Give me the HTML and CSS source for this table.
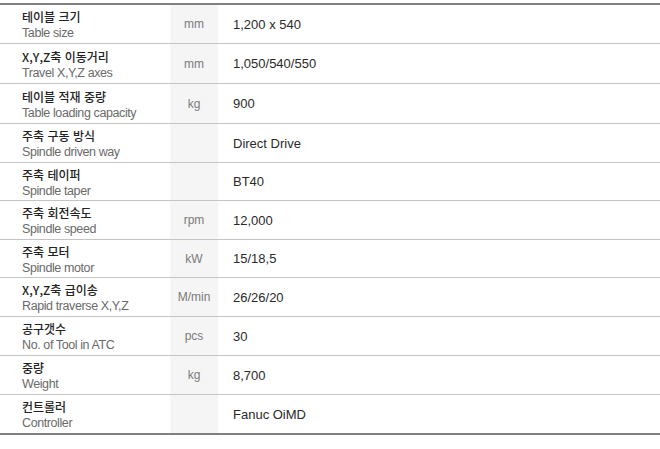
FILE: index.html
```html
<!DOCTYPE html>
<html lang="ko">
<head>
<meta charset="utf-8">
<link rel="stylesheet" href="styles.css">
</head>
<body>
<div class="spec">
  <div class="row h39"><div class="label"><span class="ko">테이블 크기</span><span class="en">Table size</span></div><div class="unit">mm</div><div class="val">1,200 x 540</div></div>
  <div class="row h40"><div class="label"><span class="ko">X,Y,Z축 이동거리</span><span class="en">Travel X,Y,Z axes</span></div><div class="unit">mm</div><div class="val">1,050/540/550</div></div>
  <div class="row h40"><div class="label"><span class="ko">테이블 적재 중량</span><span class="en">Table loading capacity</span></div><div class="unit">kg</div><div class="val">900</div></div>
  <div class="row h39"><div class="label"><span class="ko">주축 구동 방식</span><span class="en">Spindle driven way</span></div><div class="unit"></div><div class="val">Direct Drive</div></div>
  <div class="row h38"><div class="label"><span class="ko">주축 테이퍼</span><span class="en">Spindle taper</span></div><div class="unit"></div><div class="val">BT40</div></div>
  <div class="row h39"><div class="label"><span class="ko">주축 회전속도</span><span class="en">Spindle speed</span></div><div class="unit">rpm</div><div class="val">12,000</div></div>
  <div class="row h38"><div class="label"><span class="ko">주축 모터</span><span class="en">Spindle motor</span></div><div class="unit">kW</div><div class="val">15/18,5</div></div>
  <div class="row h39"><div class="label"><span class="ko">X,Y,Z축 급이송</span><span class="en">Rapid traverse X,Y,Z</span></div><div class="unit">M/min</div><div class="val">26/26/20</div></div>
  <div class="row h39"><div class="label"><span class="ko">공구갯수</span><span class="en">No. of Tool in ATC</span></div><div class="unit">pcs</div><div class="val">30</div></div>
  <div class="row h39"><div class="label"><span class="ko">중량</span><span class="en">Weight</span></div><div class="unit">kg</div><div class="val">8,700</div></div>
  <div class="row h38 last"><div class="label"><span class="ko">컨트롤러</span><span class="en">Controller</span></div><div class="unit"></div><div class="val">Fanuc OiMD</div></div>
</div>
</body>
</html>
```
FILE: styles.css
```css
html, body {
  margin: 0;
  padding: 0;
  background: #fff;
}
body {
  padding-top: 3px;
  font-family: "Noto Sans", "Noto Sans CJK KR", sans-serif;
}
.spec {
  width: 660px;
  border-top: 2px solid #808080;
  border-bottom: 2px solid #808080;
}
.row {
  display: flex;
  border-bottom: 1px solid #c4c4c4;
  box-sizing: border-box;
}
.row.last { border-bottom: none; }
.h38 { height: 38px; }
.h39 { height: 39px; }
.h40 { height: 40px; }
.label {
  width: 170px;
  box-sizing: border-box;
  padding-left: 22px;
  padding-top: 2px;
  display: flex;
  flex-direction: column;
  justify-content: center;
}
.ko {
  font-family: "Noto Sans CJK KR", sans-serif;
  font-weight: 500;
  font-size: 12px;
  line-height: 16px;
  color: #222;
}
.en {
  font-family: "Liberation Sans", sans-serif;
  font-size: 12.5px;
  letter-spacing: -0.4px;
  line-height: 16px;
  color: #6a6a6a;
}
.unit {
  width: 48px;
  background: #f5f5f5;
  display: flex;
  align-items: center;
  justify-content: center;
  font-family: "Liberation Sans", sans-serif;
  font-size: 12px;
  color: #7a7a7a;
}
.val {
  flex: 1;
  padding-left: 15px;
  display: flex;
  align-items: center;
  font-family: "Liberation Sans", sans-serif;
  font-size: 13px;
  color: #2a2a2a;
}
```
